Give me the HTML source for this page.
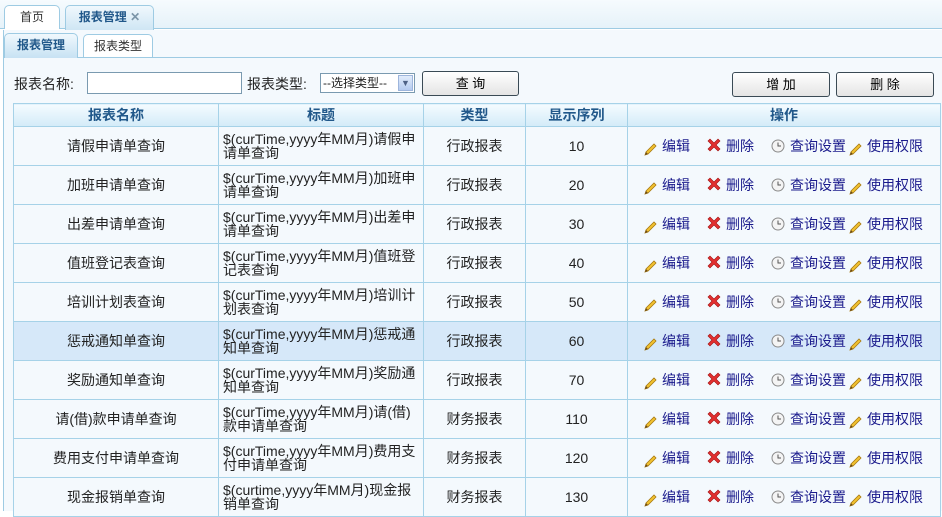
<!DOCTYPE html>
<html><head><meta charset="utf-8"><style>
*{margin:0;padding:0;box-sizing:border-box}
body{width:942px;height:511px;overflow:hidden;background:#fff;font-family:"Liberation Sans","Noto Sans CJK SC",sans-serif;font-size:14px;color:#222;position:relative}
.a{position:absolute}
.tab{position:absolute;border:1px solid #9ecbe3;border-bottom:none;border-radius:5px 5px 0 0;text-align:center;color:#333}
.btn{position:absolute;height:25px;border:1px solid #3a4a55;border-radius:3px;background:linear-gradient(#fff,#e4e4e4);text-align:center;line-height:23px;font-size:13px;color:#000}
table{position:absolute;left:13px;top:103px;border-collapse:collapse;width:928px;table-layout:fixed}
td,th{border:1px solid #a6d2e8;padding:0;height:39px;text-align:center;vertical-align:middle;overflow:hidden}
th{height:23px;background:linear-gradient(#f4fbff,#d3ebf8);color:#21588a;font-weight:bold;font-size:14px}
tr{background:#f4f9fd}
tr.h{background:#d6e8f9}
td.t{text-align:left;padding-left:4px;font-size:14px;white-space:nowrap}
td.t div{line-height:14px;margin-top:-1px}
td.o{position:relative;color:#1a1a8c;white-space:nowrap}
.o i{position:absolute;font-style:normal;top:9px}
.o svg{position:absolute;width:16px;height:16px}
</style></head><body>
<div class="a" style="left:0;top:0;width:942px;height:29px;background:linear-gradient(#f6fbfe,#e6f2f9);border-bottom:1px solid #9ecbe3"></div>
<div class="tab" style="left:4px;top:5px;width:56px;height:24px;background:#fff;line-height:23px;font-size:12px">首页</div>
<div class="tab" style="left:65px;top:5px;width:89px;height:25px;background:linear-gradient(#f0f8fd,#cfe6f4);line-height:23px;font-weight:bold;color:#21588a;font-size:12px">报表管理 <span style="color:#7b95a8">✕</span></div>
<div class="a" style="left:3px;top:30px;width:939px;height:481px;border-left:1px solid #9ecbe3;background:#f4f9fd"></div>
<div class="a" style="left:4px;top:57px;width:938px;border-top:1px solid #9ecbe3"></div>
<div class="tab" style="left:4px;top:33px;width:74px;height:25px;background:linear-gradient(#f0f8fd,#c7e2f3);line-height:23px;font-weight:bold;color:#21588a;font-size:12px">报表管理</div>
<div class="tab" style="left:83px;top:34px;width:70px;height:23px;background:#fff;line-height:22px;font-size:12px">报表类型</div>
<div class="a" style="left:14px;top:74px">报表名称:</div>
<div class="a" style="left:87px;top:72px;width:155px;height:22px;border:1px solid #7a9ab0;background:#fff"></div>
<div class="a" style="left:247px;top:74px">报表类型:</div>
<div class="a" style="left:320px;top:73px;width:95px;height:20px;border:1px solid #7a9ab0;background:#fff;font-size:12px;line-height:18px;padding-left:2px">--选择类型--<span style="position:absolute;right:1px;top:1px;width:15px;height:16px;background:linear-gradient(#e1ecfb,#b5cbf0);border:1px solid #9db5dc;color:#4d6185;font-size:9px;line-height:14px;text-align:center">▼</span></div>
<div class="btn" style="left:422px;top:71px;width:97px">查 询</div>
<div class="btn" style="left:732px;top:72px;width:98px">增 加</div>
<div class="btn" style="left:836px;top:72px;width:98px">删 除</div>
<table>
<colgroup><col style="width:205px"><col style="width:205px"><col style="width:102px"><col style="width:102px"><col></colgroup>
<tr><th>报表名称</th><th>标题</th><th>类型</th><th>显示序列</th><th>操作</th></tr>
<tr><td>请假申请单查询</td><td class="t"><div>$(curTime,yyyy年MM月)请假申<br>请单查询</div></td><td>行政报表</td><td>10</td><td class="o"></td></tr>
<tr><td>加班申请单查询</td><td class="t"><div>$(curTime,yyyy年MM月)加班申<br>请单查询</div></td><td>行政报表</td><td>20</td><td class="o"></td></tr>
<tr><td>出差申请单查询</td><td class="t"><div>$(curTime,yyyy年MM月)出差申<br>请单查询</div></td><td>行政报表</td><td>30</td><td class="o"></td></tr>
<tr><td>值班登记表查询</td><td class="t"><div>$(curTime,yyyy年MM月)值班登<br>记表查询</div></td><td>行政报表</td><td>40</td><td class="o"></td></tr>
<tr><td>培训计划表查询</td><td class="t"><div>$(curTime,yyyy年MM月)培训计<br>划表查询</div></td><td>行政报表</td><td>50</td><td class="o"></td></tr>
<tr class="h"><td>惩戒通知单查询</td><td class="t"><div>$(curTime,yyyy年MM月)惩戒通<br>知单查询</div></td><td>行政报表</td><td>60</td><td class="o"></td></tr>
<tr><td>奖励通知单查询</td><td class="t"><div>$(curTime,yyyy年MM月)奖励通<br>知单查询</div></td><td>行政报表</td><td>70</td><td class="o"></td></tr>
<tr><td>请(借)款申请单查询</td><td class="t"><div>$(curTime,yyyy年MM月)请(借)<br>款申请单查询</div></td><td>财务报表</td><td>110</td><td class="o"></td></tr>
<tr><td>费用支付申请单查询</td><td class="t"><div>$(curTime,yyyy年MM月)费用支<br>付申请单查询</div></td><td>财务报表</td><td>120</td><td class="o"></td></tr>
<tr><td>现金报销单查询</td><td class="t"><div>$(curtime,yyyy年MM月)现金报<br>销单查询</div></td><td>财务报表</td><td>130</td><td class="o"></td></tr>
</table>
<script>
function pen(l){return '<svg style="left:'+l+'px;top:14px" viewBox="0 0 16 16"><path d="M2 14 L3 11 L11 3 L13 5 L5 13 Z" fill="#f2c230" stroke="#a87a10" stroke-width="0.8"/><path d="M2 14 L3 11 L5 13 Z" fill="#6b4b1a"/></svg>';}
var x='<svg style="left:78px;top:10px" viewBox="0 0 16 16"><path d="M2 4 L4 2 L8 6 L12 2 L14 4 L10 8 L14 12 L12 14 L8 10 L4 14 L2 12 L6 8 Z" fill="#e23030" stroke="#a01010" stroke-width="0.6"/></svg>';
var clk='<svg style="left:142px;top:11px" viewBox="0 0 16 16"><circle cx="8" cy="8" r="6" fill="#f4f4f4" stroke="#8a8a8a"/><path d="M8 4.5 V8 H11" fill="none" stroke="#555" stroke-width="1"/></svg>';
var ops=pen(15)+'<i style="left:34px">编辑</i>'+x+'<i style="left:98px">删除</i>'+clk+'<i style="left:162px">查询设置</i>'+pen(220)+'<i style="left:239px">使用权限</i>';
document.querySelectorAll('td.o').forEach(function(e){e.innerHTML=ops});
</script>
</body></html>
